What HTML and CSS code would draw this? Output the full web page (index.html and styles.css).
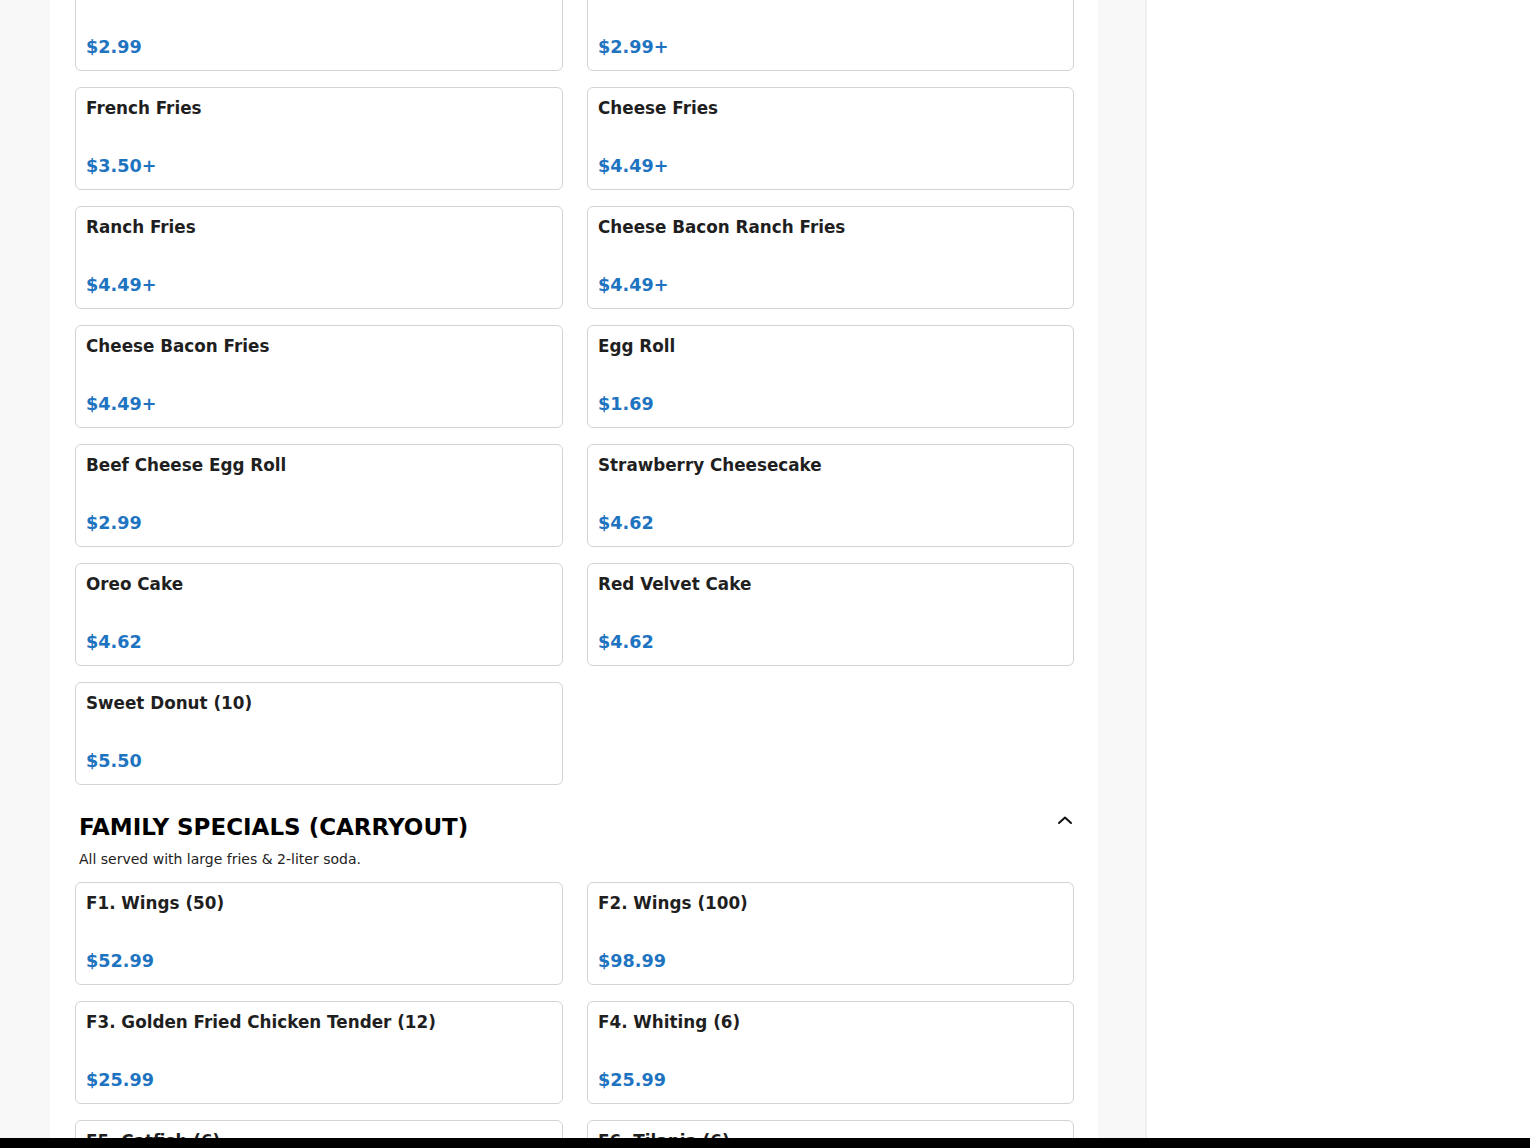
FILE: index.html
```html
<!DOCTYPE html>
<html lang="en">
<head>
<meta charset="utf-8">
<title>Menu</title>
<link rel="stylesheet" href="styles.css">
</head>
<body>
<div class="page">
  <div class="gutter"></div>
  <main class="menu">
    <section class="items items-first">
      <div class="card"><div class="card-title">Onion Rings</div><div class="card-price">$2.99</div></div>
      <div class="card"><div class="card-title">Hush Puppies</div><div class="card-price">$2.99+</div></div>
      <div class="card"><div class="card-title">French Fries</div><div class="card-price">$3.50+</div></div>
      <div class="card"><div class="card-title">Cheese Fries</div><div class="card-price">$4.49+</div></div>
      <div class="card"><div class="card-title">Ranch Fries</div><div class="card-price">$4.49+</div></div>
      <div class="card"><div class="card-title">Cheese Bacon Ranch Fries</div><div class="card-price">$4.49+</div></div>
      <div class="card"><div class="card-title">Cheese Bacon Fries</div><div class="card-price">$4.49+</div></div>
      <div class="card"><div class="card-title">Egg Roll</div><div class="card-price">$1.69</div></div>
      <div class="card"><div class="card-title">Beef Cheese Egg Roll</div><div class="card-price">$2.99</div></div>
      <div class="card"><div class="card-title">Strawberry Cheesecake</div><div class="card-price">$4.62</div></div>
      <div class="card"><div class="card-title">Oreo Cake</div><div class="card-price">$4.62</div></div>
      <div class="card"><div class="card-title">Red Velvet Cake</div><div class="card-price">$4.62</div></div>
      <div class="card"><div class="card-title">Sweet Donut (10)</div><div class="card-price">$5.50</div></div>
    </section>

    <section class="category">
      <div class="category-head">
        <h2 class="category-title">FAMILY SPECIALS (CARRYOUT)</h2>
        <svg class="chevron" width="16" height="10" viewBox="0 0 16 10" aria-hidden="true">
          <path d="M2 8 L8 2.5 L14 8" fill="none" stroke="#111" stroke-width="2" stroke-linecap="round" stroke-linejoin="round"/>
        </svg>
      </div>
      <p class="category-desc">All served with large fries &amp; 2-liter soda.</p>
      <div class="items">
        <div class="card"><div class="card-title">F1. Wings (50)</div><div class="card-price">$52.99</div></div>
        <div class="card"><div class="card-title">F2. Wings (100)</div><div class="card-price">$98.99</div></div>
        <div class="card"><div class="card-title">F3. Golden Fried Chicken Tender (12)</div><div class="card-price">$25.99</div></div>
        <div class="card"><div class="card-title">F4. Whiting (6)</div><div class="card-price">$25.99</div></div>
        <div class="card"><div class="card-title">F5. Catfish (6)</div><div class="card-price">$25.99</div></div>
        <div class="card"><div class="card-title">F6. Tilapia (6)</div><div class="card-price">$25.99</div></div>
      </div>
    </section>
  </main>
  <aside class="side"></aside>
  <div class="rest"></div>
</div>
<div class="bottom-bar"></div>
</body>
</html>
```
FILE: styles.css
```css
* { box-sizing: border-box; }

html, body {
  margin: 0;
  padding: 0;
  background: #ffffff;
  font-family: "DejaVu Sans", "Noto Sans", sans-serif;
  color: #1f1f1f;
  overflow: hidden;
}

.page {
  display: flex;
  min-height: 100vh;
  height: 1400px;
}

.gutter {
  width: 50px;
  flex: none;
  background: #f8f8f8;
}

.menu {
  width: 1048px;
  flex: none;
  background: #ffffff;
  padding: 0 25px;
}

.side {
  width: 49px;
  flex: none;
  background: #f8f8f8;
  border-right: 2px solid #efefef;
}

.rest {
  flex: 1;
  background: #ffffff;
}

.items {
  display: grid;
  grid-template-columns: 488px 487px;
  gap: 16px 24px;
}

.items-first {
  margin-top: -32px;
}

.card {
  height: 103px;
  border: 1px solid #d3d3d3;
  border-radius: 6px;
  padding: 10px 10px 12px;
  display: flex;
  flex-direction: column;
  justify-content: space-between;
  background: #ffffff;
}

.card-title {
  font-size: 16.8px;
  font-weight: bold;
  line-height: 20px;
  color: #1f1f1f;
}

.card-price {
  font-size: 17.6px;
  font-weight: bold;
  line-height: 22px;
  color: #1e74c1;
}

.category {
  margin-top: 28px;
}

.category-head {
  display: flex;
  justify-content: space-between;
  align-items: flex-start;
  padding: 0 0 0 4px;
}

.category-title {
  margin: 0;
  font-size: 23px;
  line-height: 28px;
  font-weight: bold;
  color: #000000;
}

.chevron {
  margin-top: 2px;
  margin-right: 0;
}

.category-desc {
  margin: 10px 0 15px 4px;
  font-size: 14px;
  line-height: 16px;
  color: #222222;
}

.bottom-bar {
  position: fixed;
  left: 0;
  right: 0;
  bottom: 0;
  height: 10px;
  background: #000000;
}
```
